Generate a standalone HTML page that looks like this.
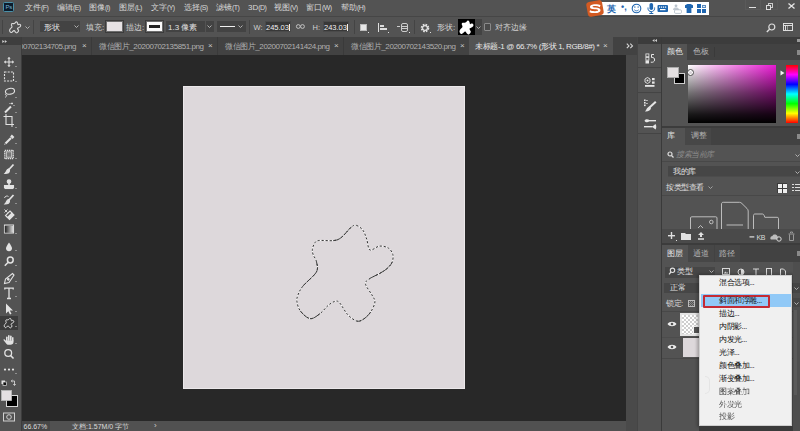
<!DOCTYPE html>
<html><head><meta charset="utf-8">
<style>
*{margin:0;padding:0;box-sizing:border-box}
html,body{width:800px;height:431px;overflow:hidden;background:#535353;font-family:"Liberation Sans",sans-serif;color:#ddd}
.a{position:absolute}
.t{position:absolute;white-space:nowrap;font-size:8px;line-height:10px}
.k{font-size:7px;letter-spacing:-0.6px}
#menubar{left:0;top:0;width:800px;height:16px;background:#535353}
#opts{left:0;top:16px;width:800px;height:21px;background:#535353;border-top:1px solid #464646}
#tools{left:0;top:37px;width:21px;height:394px;background:#535353}
#toolhdr{left:0;top:37px;width:21px;height:7.5px;background:#3e3e3e}
#tabbar{left:21px;top:37px;width:617px;height:18px;background:#424242}
#canvas{left:22px;top:55px;width:604px;height:366px;background:#282828}
#status{left:22px;top:421px;width:605px;height:10px;background:#424242}
#doc{left:183px;top:86px;width:282px;height:303px;background:#ddd8db}
#gapcol{left:626px;top:55px;width:11px;height:376px;background:#4a4a4a}
#iconcol{left:637px;top:37px;width:25px;height:394px;background:#3c3c3c}
#panels{left:662px;top:37px;width:138px;height:394px;background:#3c3c3c}
.mi{color:#d8d8d8;top:3px}
.sep{position:absolute;width:1px;background:#444}
.fld{position:absolute;background:#454545}
.ol{color:#d0d0d0;top:22px}
svg{position:absolute;overflow:visible}
</style></head><body>
<div id="menubar" class="a"></div>
<div id="opts" class="a"></div>
<div id="tools" class="a"></div>
<div id="toolhdr" class="a"></div>
<div id="tabbar" class="a"></div>
<div id="canvas" class="a"></div>
<div id="status" class="a"></div>
<div id="doc" class="a"></div>
<div id="gapcol" class="a"></div>
<div id="iconcol" class="a"></div>
<div id="panels" class="a"></div>

<!-- menubar -->
<div class="a" style="left:3px;top:2px;width:10.5px;height:10.2px;background:#0c1c2c;border:1.5px solid #4a90a8;border-radius:1.5px"></div>
<div class="t" style="left:5.5px;top:3.5px;font-size:6px;line-height:7px;color:#7ab6d6;letter-spacing:-0.3px">Ps</div>
<div class="t mi" style="left:25px">文件<span class="k">(F)</span></div>
<div class="t mi" style="left:57px">编辑<span class="k">(E)</span></div>
<div class="t mi" style="left:89px">图像<span class="k">(I)</span></div>
<div class="t mi" style="left:119px">图层<span class="k">(L)</span></div>
<div class="t mi" style="left:151px">文字<span class="k">(Y)</span></div>
<div class="t mi" style="left:184px">选择<span class="k">(S)</span></div>
<div class="t mi" style="left:216px">滤镜<span class="k">(T)</span></div>
<div class="t mi" style="left:248px"><span class="k" style="font-size:8px;letter-spacing:0">3D</span><span class="k">(D)</span></div>
<div class="t mi" style="left:274px">视图<span class="k">(V)</span></div>
<div class="t mi" style="left:306px">窗口<span class="k">(W)</span></div>
<div class="t mi" style="left:341px">帮助<span class="k">(H)</span></div>

<!-- sogou ime bar -->
<div class="a" style="left:599px;top:2px;width:110px;height:13px;background:#fff"></div>
<div class="a" style="left:587px;top:1px;width:15.5px;height:15px;background:#d35a22;border-radius:3px;transform:rotate(-10deg)"></div>
<svg style="left:0;top:0" width="610" height="20"><path d="M600.5 5.2C599 4.3 596.5 4 594 4.2C591 4.5 589.8 5.7 590 7.3C590.2 8.8 592 9.2 594.5 9.3C597 9.4 598 9.6 598 10.3C598 11 596.5 11.3 594.5 11.2C592.5 11.1 591 10.7 590 10.2L589.5 12.2C591 12.9 593 13.2 595 13.1C598.5 13 600.5 12 600.5 10.2C600.5 8.4 598.5 7.7 595.5 7.6C593.3 7.5 592.5 7.3 592.5 6.8C592.5 6.2 593.8 6 595.5 6.1C597.2 6.2 598.5 6.5 599.8 7.2Z" fill="#fff"/></svg>
<div class="t" style="left:607px;top:3.5px;font-size:9px;color:#1f66b0;font-weight:bold">英</div>
<div class="t" style="left:621px;top:2px;font-size:9px;color:#1f66b0;font-weight:bold">•,</div>
<svg style="left:0;top:0" width="720" height="20"><g fill="none" stroke="#1f66b0">
<circle cx="636.5" cy="8.5" r="4.3" stroke-width="1.1"/>
<path d="M634.3 9.8C635.5 11.2 637.5 11.2 638.7 9.8" stroke-width="0.9"/>
</g><g fill="#1f66b0"><rect x="634.3" y="6.4" width="1.1" height="1.3"/><rect x="637.6" y="6.4" width="1.1" height="1.3"/>
<rect x="649.5" y="3" width="3.6" height="7" rx="1.8"/>
<path d="M648 7.5V8.5C648 10.5 649.5 11.6 651.3 11.6C653.1 11.6 654.6 10.5 654.6 8.5V7.5" fill="none" stroke="#1f66b0" stroke-width="1"/>
<rect x="650.8" y="11.5" width="1" height="2"/><rect x="649.3" y="13" width="4" height="1"/>
<rect x="657.5" y="5" width="10.5" height="7" rx="1"/>
</g><g fill="#fff"><rect x="659" y="6.5" width="1.2" height="1.2"/><rect x="661" y="6.5" width="1.2" height="1.2"/><rect x="663" y="6.5" width="1.2" height="1.2"/><rect x="665" y="6.5" width="1.2" height="1.2"/><rect x="660" y="9" width="5.5" height="1.2"/></g></svg>
<svg style="left:0;top:0" width="712" height="18"><circle cx="676" cy="5.8" r="1.4" fill="#b8c2cc"/><path d="M673 10C673 8 674.5 7.6 676 7.6C677.5 7.6 679 8 679 10Z" fill="#c2cad2"/><rect x="674.5" y="9.8" width="7" height="3.6" rx="1.2" fill="none" stroke="#b8c2cc" stroke-width="0.9"/></svg>

<div class="a" style="left:685px;top:4px;width:8px;height:9px;background:#1f66b0;clip-path:polygon(0 15%,30% 0,70% 0,100% 15%,100% 45%,80% 45%,80% 100%,20% 100%,20% 45%,0 45%)"></div>
<div class="a" style="left:697px;top:4px;width:4px;height:4px;background:#1f66b0"></div>
<div class="a" style="left:702px;top:4.5px;width:3.5px;height:3.5px;background:#dfe8f2;border:1px solid #5b8cc0"></div>
<div class="a" style="left:697px;top:9px;width:4px;height:4px;background:#1f66b0"></div>
<div class="a" style="left:702px;top:9px;width:4px;height:4px;background:#1f66b0"></div>

<!-- window controls -->
<div class="a" style="left:744.5px;top:-1px;width:16px;height:11px;border:1px solid #5a5a5a"></div><div class="a" style="left:760.5px;top:-1px;width:17px;height:11px;border:1px solid #585858;border-left:none"></div><div class="a" style="left:749px;top:6.5px;width:7px;height:1.6px;background:#e0e0e0"></div>
<div class="a" style="left:768px;top:3px;width:5px;height:5px;border:1px solid #ccc"></div>
<div class="a" style="left:766px;top:5px;width:5px;height:5px;border:1px solid #ddd;background:#535353"></div>
<svg style="left:788px;top:3px" width="7" height="6"><path d="M0.5 0.5L6.5 5.5M6.5 0.5L0.5 5.5" stroke="#e6e6e6" stroke-width="1.3"/></svg>


<!-- options bar -->
<div class="a" style="left:2px;top:20px;width:1px;height:14px;background:#444"></div>
<svg style="left:0;top:0" width="30" height="40"><path transform="translate(9.6,21.8) scale(0.115) translate(-297,-225)" d="M356.5 225.4C358.4 225.9 361.2 227.9 362.9 230.2C364.6 232.5 365.5 235.8 366.7 239.1C367.9 242.4 367.8 248.8 369.9 250C372 251.2 376.3 246.4 379.4 246.1C382.5 245.8 386.2 246.7 388.4 248.1C390.6 249.5 392.2 252.1 392.8 254.4C393.4 256.7 393.1 259.8 392.2 262.1C391.2 264.5 389.2 266.6 387.1 268.5C385 270.4 382.4 271.9 379.4 273.6C376.4 275.3 371.6 277.2 369.3 278.9C367 280.6 365.1 281.3 365.5 284C365.9 286.7 370.3 291.9 371.9 294.9C373.5 297.9 375.1 299.1 374.9 302C374.7 304.9 372.5 309.2 370.6 312.1C368.7 315 365.9 317.6 363.6 319.1C361.3 320.6 359.2 321.8 356.6 321C354 320.2 350.6 317.7 347.7 314.6C344.8 311.5 341.6 304.8 339.4 302.6C337.2 300.4 336.4 301 334.5 301.5C332.6 302 330.6 303.4 328.2 305.4C325.8 307.4 322.9 311.5 319.9 313.7C316.9 315.9 313.4 319.1 310.1 318.6C306.9 318.2 302.6 313.9 300.4 311C298.2 308.1 297.2 304 296.9 301.2C296.5 298.4 297.3 296.8 298.3 294.2C299.3 291.6 300.1 289.6 303.1 285.9C306.1 282.2 314.2 276 316.4 272C318.6 268 317 264.7 316.5 261.8C316 258.9 313.9 256.8 313.2 254.8C312.5 252.8 312.2 251.3 312.4 249.6C312.5 247.9 313.1 245.9 314.1 244.4C315.1 242.9 315 241.2 318.2 240.6C321.4 240 329.4 241.1 333.3 240.6C337.2 240.1 338.4 239.7 341.4 237.4C344.4 235.1 348.9 229 351.4 227C353.9 225 354.6 224.9 356.5 225.4Z" fill="none" stroke="#d8d8d8" stroke-width="1.1" vector-effect="non-scaling-stroke"/></svg>
<svg style="left:25px;top:26px" width="5" height="3"><path d="M0.5 0.5L2.5 2.5L4.5 0.5" fill="none" stroke="#bbb" stroke-width="0.9"/></svg>
<div class="a" style="left:33px;top:20px;width:1px;height:14px;background:#444"></div>
<div class="fld" style="left:40px;top:21px;width:40px;height:11px;background:#434343"></div>
<div class="t ol" style="left:44px;top:22.5px;color:#e0e0e0">形状</div>
<svg style="left:74px;top:25px" width="5" height="3"><path d="M0.5 0.5L2.5 2.5L4.5 0.5" fill="none" stroke="#bbb" stroke-width="0.9"/></svg>
<div class="t ol" style="left:86px;top:22.5px">填充:</div>
<div class="a" style="left:105px;top:20px;width:19px;height:13px;border:1px solid #3c3c3c;background:#6e6e6e"></div><div class="a" style="left:107px;top:22px;width:15px;height:9px;background:#e6e2e4"></div>
<div class="t ol" style="left:126px;top:22.5px">描边:</div>
<div class="a" style="left:145px;top:20px;width:19px;height:13px;border:1px solid #3c3c3c;background:#6e6e6e"></div><div class="a" style="left:147px;top:22px;width:15px;height:9px;background:#fafafa"></div>
<div class="a" style="left:149px;top:25px;width:11px;height:3px;background:#222"></div>
<div class="fld" style="left:166px;top:21px;width:39px;height:11px;background:#434343"></div>
<div class="t ol" style="left:168px;top:22.5px;color:#e0e0e0"><span class="k" style="font-size:8px;letter-spacing:0">1.3</span> 像素</div>
<div class="fld" style="left:205px;top:21px;width:9px;height:11px;background:#434343;border-left:1px solid #535353"></div>
<svg style="left:207px;top:25px" width="5" height="3"><path d="M0.5 0.5L2.5 2.5L4.5 0.5" fill="none" stroke="#bbb" stroke-width="0.9"/></svg>
<div class="fld" style="left:217px;top:21px;width:29px;height:11px;background:#434343"></div>
<div class="a" style="left:220px;top:26px;width:15px;height:1px;background:#f0f0f0"></div>
<svg style="left:238px;top:25px" width="5" height="3"><path d="M0.5 0.5L2.5 2.5L4.5 0.5" fill="none" stroke="#bbb" stroke-width="0.9"/></svg>
<div class="a" style="left:249px;top:20px;width:1px;height:14px;background:#444"></div>
<div class="t ol" style="left:253.5px;top:22.5px;font-size:7.5px">W:</div>
<div class="fld" style="left:265px;top:21px;width:26px;height:11px;background:#383838;border:1px solid #4a4a4a"></div>
<div class="t ol" style="left:266px;top:22.5px;font-size:7.5px;color:#f0f0f0;letter-spacing:0px">245.03</div>
<div class="a" style="left:289px;top:24px;width:1px;height:7px;background:#eee"></div>
<svg style="left:296px;top:24px" width="9" height="5"><circle cx="2.3" cy="2.5" r="1.9" fill="none" stroke="#ccc" stroke-width="0.9"/><circle cx="6.5" cy="2.5" r="1.9" fill="none" stroke="#ccc" stroke-width="0.9"/></svg>
<div class="t ol" style="left:312.5px;top:22.5px;font-size:7.5px">H:</div>
<div class="fld" style="left:323px;top:21px;width:26px;height:11px;background:#383838;border:1px solid #4a4a4a"></div>
<div class="t ol" style="left:324px;top:22.5px;font-size:7.5px;color:#f0f0f0;letter-spacing:0px">243.03</div>
<div class="a" style="left:347px;top:24px;width:1px;height:7px;background:#eee"></div>
<div class="a" style="left:354px;top:20px;width:1px;height:14px;background:#444"></div>
<div class="a" style="left:360px;top:24px;width:7px;height:7px;background:#e8e8e8;border:1px solid #bbb"></div>
<div class="a" style="left:368px;top:32px;width:1px;height:1px;background:#ddd"></div>
<div class="a" style="left:378px;top:23px;width:1px;height:9px;background:#ddd"></div>
<div class="a" style="left:380px;top:25px;width:4px;height:2px;background:#ddd"></div>
<div class="a" style="left:380px;top:28px;width:7px;height:2px;background:#ddd"></div>
<div class="a" style="left:388px;top:32px;width:1px;height:1px;background:#ddd"></div>
<div class="a" style="left:397px;top:26px;width:3px;height:1px;background:#ccc"></div>
<div class="a" style="left:401px;top:23px;width:7px;height:9px;border:1px solid #ccc;border-radius:2px"></div>
<div class="a" style="left:402px;top:26px;width:5px;height:1px;background:#ccc"></div>
<div class="a" style="left:402px;top:28px;width:5px;height:1px;background:#ccc"></div>
<div class="a" style="left:409px;top:32px;width:1px;height:1px;background:#ddd"></div>
<div class="a" style="left:414px;top:20px;width:1px;height:14px;background:#444"></div>
<svg style="left:420px;top:23px" width="10" height="10" viewBox="0 0 10 10"><circle cx="5" cy="5" r="3.3" fill="none" stroke="#e0e0e0" stroke-width="2" stroke-dasharray="1.6 1"/><circle cx="5" cy="5" r="2.4" fill="none" stroke="#e0e0e0" stroke-width="1.2"/></svg>
<div class="a" style="left:430px;top:32px;width:1px;height:1px;background:#ddd"></div>
<div class="t ol" style="left:437px;top:22.5px">形状:</div>
<div class="a" style="left:458px;top:19px;width:17px;height:16px;background:#000"></div>
<svg style="left:0;top:0" width="480" height="40"><path transform="translate(459.5,20.5) scale(0.145) translate(-297,-225)" d="M356.5 225.4C358.4 225.9 361.2 227.9 362.9 230.2C364.6 232.5 365.5 235.8 366.7 239.1C367.9 242.4 367.8 248.8 369.9 250C372 251.2 376.3 246.4 379.4 246.1C382.5 245.8 386.2 246.7 388.4 248.1C390.6 249.5 392.2 252.1 392.8 254.4C393.4 256.7 393.1 259.8 392.2 262.1C391.2 264.5 389.2 266.6 387.1 268.5C385 270.4 382.4 271.9 379.4 273.6C376.4 275.3 371.6 277.2 369.3 278.9C367 280.6 365.1 281.3 365.5 284C365.9 286.7 370.3 291.9 371.9 294.9C373.5 297.9 375.1 299.1 374.9 302C374.7 304.9 372.5 309.2 370.6 312.1C368.7 315 365.9 317.6 363.6 319.1C361.3 320.6 359.2 321.8 356.6 321C354 320.2 350.6 317.7 347.7 314.6C344.8 311.5 341.6 304.8 339.4 302.6C337.2 300.4 336.4 301 334.5 301.5C332.6 302 330.6 303.4 328.2 305.4C325.8 307.4 322.9 311.5 319.9 313.7C316.9 315.9 313.4 319.1 310.1 318.6C306.9 318.2 302.6 313.9 300.4 311C298.2 308.1 297.2 304 296.9 301.2C296.5 298.4 297.3 296.8 298.3 294.2C299.3 291.6 300.1 289.6 303.1 285.9C306.1 282.2 314.2 276 316.4 272C318.6 268 317 264.7 316.5 261.8C316 258.9 313.9 256.8 313.2 254.8C312.5 252.8 312.2 251.3 312.4 249.6C312.5 247.9 313.1 245.9 314.1 244.4C315.1 242.9 315 241.2 318.2 240.6C321.4 240 329.4 241.1 333.3 240.6C337.2 240.1 338.4 239.7 341.4 237.4C344.4 235.1 348.9 229 351.4 227C353.9 225 354.6 224.9 356.5 225.4Z" fill="#fff"/></svg>
<div class="fld" style="left:475px;top:19px;width:7px;height:16px;background:#434343"></div>
<svg style="left:476px;top:26px" width="5" height="3"><path d="M0.5 0.5L2.5 2.5L4.5 0.5" fill="none" stroke="#bbb" stroke-width="0.9"/></svg>
<div class="a" style="left:484px;top:23px;width:7px;height:8px;border:1px solid #8a8a8a;border-radius:1px;background:#4a4a4a"></div>
<div class="t ol" style="left:495px;top:22.5px">对齐边缘</div>
<svg style="left:766px;top:23px" width="10" height="10" viewBox="0 0 10 10"><circle cx="5.8" cy="4" r="3" fill="none" stroke="#ddd" stroke-width="1.2"/><path d="M3.6 6.2L0.8 9" stroke="#ddd" stroke-width="1.4"/></svg>
<div class="a" style="left:783px;top:23px;width:10px;height:8px;border:1px solid #ddd"></div>
<div class="a" style="left:784px;top:25px;width:8px;height:1px;background:#ddd"></div>
<div class="a" style="left:784.5px;top:26px;width:1.5px;height:4px;background:#ddd"></div>
<div class="a" style="left:787px;top:26px;width:1px;height:4px;background:#999"></div>

<!-- tabs -->
<div class="a" style="left:22px;top:37px;width:60px;height:18px;overflow:hidden"><div class="t" style="left:-3px;top:4.5px;color:#b0b0b0;font-size:8px;letter-spacing:-0.5px">00702134705.png</div></div>
<div class="t" style="left:82px;top:41px;color:#c8c8c8;font-size:8px">×</div>
<div class="a" style="left:91px;top:37px;width:1px;height:18px;background:#3a3a3a"></div>
<div class="t" style="left:99px;top:41.5px;color:#b0b0b0;font-size:8px;letter-spacing:-0.42px">微信图片_20200702135851.png</div>
<div class="t" style="left:208px;top:41px;color:#c8c8c8;font-size:8px">×</div>
<div class="a" style="left:217px;top:37px;width:1px;height:18px;background:#3a3a3a"></div>
<div class="t" style="left:225px;top:41.5px;color:#b0b0b0;font-size:8px;letter-spacing:-0.42px">微信图片_20200702141424.png</div>
<div class="t" style="left:334px;top:41px;color:#c8c8c8;font-size:8px">×</div>
<div class="a" style="left:343px;top:37px;width:1px;height:18px;background:#3a3a3a"></div>
<div class="t" style="left:351px;top:41.5px;color:#b0b0b0;font-size:8px;letter-spacing:-0.42px">微信图片_20200702143520.png</div>
<div class="t" style="left:460px;top:41px;color:#c8c8c8;font-size:8px">×</div>
<div class="a" style="left:469px;top:37px;width:144px;height:18px;background:#535353"></div>
<div class="t" style="left:475px;top:41.5px;color:#e8e8e8;font-size:8px;letter-spacing:-0.35px">未标题-1 @ 66.7% (形状 1, RGB/8#) *</div>
<div class="t" style="left:603px;top:41px;color:#d0d0d0;font-size:8px">×</div>

<!-- canvas shape -->
<svg style="left:0;top:0" width="800" height="431"><path d="M356.5 225.4C358.4 225.9 361.2 227.9 362.9 230.2C364.6 232.5 365.5 235.8 366.7 239.1C367.9 242.4 367.8 248.8 369.9 250C372 251.2 376.3 246.4 379.4 246.1C382.5 245.8 386.2 246.7 388.4 248.1C390.6 249.5 392.2 252.1 392.8 254.4C393.4 256.7 393.1 259.8 392.2 262.1C391.2 264.5 389.2 266.6 387.1 268.5C385 270.4 382.4 271.9 379.4 273.6C376.4 275.3 371.6 277.2 369.3 278.9C367 280.6 365.1 281.3 365.5 284C365.9 286.7 370.3 291.9 371.9 294.9C373.5 297.9 375.1 299.1 374.9 302C374.7 304.9 372.5 309.2 370.6 312.1C368.7 315 365.9 317.6 363.6 319.1C361.3 320.6 359.2 321.8 356.6 321C354 320.2 350.6 317.7 347.7 314.6C344.8 311.5 341.6 304.8 339.4 302.6C337.2 300.4 336.4 301 334.5 301.5C332.6 302 330.6 303.4 328.2 305.4C325.8 307.4 322.9 311.5 319.9 313.7C316.9 315.9 313.4 319.1 310.1 318.6C306.9 318.2 302.6 313.9 300.4 311C298.2 308.1 297.2 304 296.9 301.2C296.5 298.4 297.3 296.8 298.3 294.2C299.3 291.6 300.1 289.6 303.1 285.9C306.1 282.2 314.2 276 316.4 272C318.6 268 317 264.7 316.5 261.8C316 258.9 313.9 256.8 313.2 254.8C312.5 252.8 312.2 251.3 312.4 249.6C312.5 247.9 313.1 245.9 314.1 244.4C315.1 242.9 315 241.2 318.2 240.6C321.4 240 329.4 241.1 333.3 240.6C337.2 240.1 338.4 239.7 341.4 237.4C344.4 235.1 348.9 229 351.4 227C353.9 225 354.6 224.9 356.5 225.4Z" fill="none" stroke="#ffffff" stroke-width="1"/><path d="M356.5 225.4C358.4 225.9 361.2 227.9 362.9 230.2C364.6 232.5 365.5 235.8 366.7 239.1C367.9 242.4 367.8 248.8 369.9 250C372 251.2 376.3 246.4 379.4 246.1C382.5 245.8 386.2 246.7 388.4 248.1C390.6 249.5 392.2 252.1 392.8 254.4C393.4 256.7 393.1 259.8 392.2 262.1C391.2 264.5 389.2 266.6 387.1 268.5C385 270.4 382.4 271.9 379.4 273.6C376.4 275.3 371.6 277.2 369.3 278.9C367 280.6 365.1 281.3 365.5 284C365.9 286.7 370.3 291.9 371.9 294.9C373.5 297.9 375.1 299.1 374.9 302C374.7 304.9 372.5 309.2 370.6 312.1C368.7 315 365.9 317.6 363.6 319.1C361.3 320.6 359.2 321.8 356.6 321C354 320.2 350.6 317.7 347.7 314.6C344.8 311.5 341.6 304.8 339.4 302.6C337.2 300.4 336.4 301 334.5 301.5C332.6 302 330.6 303.4 328.2 305.4C325.8 307.4 322.9 311.5 319.9 313.7C316.9 315.9 313.4 319.1 310.1 318.6C306.9 318.2 302.6 313.9 300.4 311C298.2 308.1 297.2 304 296.9 301.2C296.5 298.4 297.3 296.8 298.3 294.2C299.3 291.6 300.1 289.6 303.1 285.9C306.1 282.2 314.2 276 316.4 272C318.6 268 317 264.7 316.5 261.8C316 258.9 313.9 256.8 313.2 254.8C312.5 252.8 312.2 251.3 312.4 249.6C312.5 247.9 313.1 245.9 314.1 244.4C315.1 242.9 315 241.2 318.2 240.6C321.4 240 329.4 241.1 333.3 240.6C337.2 240.1 338.4 239.7 341.4 237.4C344.4 235.1 348.9 229 351.4 227C353.9 225 354.6 224.9 356.5 225.4Z" fill="none" stroke="#333" stroke-width="1" stroke-dasharray="2.2 1.8"/><path d="M333.3 240.6C337.2 240.1 338.4 239.7 341.4 237.4C344.4 235.1 348.9 229 351.4 227 M303.1 285.9C306.1 282.2 314.2 276 316.4 272C318.6 268 317 264.7 316.5 261.8 M392.2 262.1C391.2 264.5 389.2 266.6 387.1 268.5C385 270.4 382.4 271.9 379.4 273.6C376.4 275.3 371.6 277.2 369.3 278.9 M370.6 312.1C368.7 315 365.9 317.6 363.6 319.1C361.3 320.6 359.2 321.8 356.6 321 M319.9 313.7C316.9 315.9 313.4 319.1 310.1 318.6C306.9 318.2 302.6 313.9 300.4 311" fill="none" stroke="#3c3c3c" stroke-width="1" stroke-dasharray="5 1.4"/></svg>
<div class="a" style="left:183px;top:86px;width:282px;height:303px;border:1px solid #ebe8ea"></div>

<!-- status -->
<div class="a" style="left:22px;top:421px;width:604px;height:10px;background:#515151"></div>
<div class="a" style="left:22px;top:421px;width:28px;height:10px;background:#474747"></div>
<div class="t" style="left:23.5px;top:421.5px;font-size:7px;line-height:9px;color:#dcdcdc">66.67%</div>
<div class="t" style="left:72px;top:421.5px;font-size:7px;line-height:9px;color:#dcdcdc">文档:1.57M/0 字节</div>
<div class="t" style="left:154px;top:421px;font-size:8px;line-height:9px;color:#ccc">›</div>
<!-- toolbar -->
<svg style="left:2px;top:39.5px" width="6" height="4"><path d="M0.3 0V3L2.5 1.5ZM2.8 0V3L5 1.5Z" fill="#cfcfcf"/></svg>
<div class="a" style="left:21px;top:37px;width:1px;height:394px;background:#3c3c3c"></div>
<div class="a" style="left:0;top:316px;width:18px;height:14px;background:#3b3b3b"></div>
<svg style="left:0;top:0" width="22" height="431" viewBox="0 0 22 431">
<g fill="none" stroke="#e2e2e2" stroke-width="1.1">
<!-- move -->
<path d="M9 57.5V66.5M4.5 62H13.5"/>
<path d="M9 57L7.3 58.8H10.7ZM9 67L7.3 65.2H10.7ZM4 62L5.8 60.3V63.7ZM14 62L12.2 60.3V63.7Z" fill="#e2e2e2" stroke="none"/>
<!-- marquee -->
<rect x="4.5" y="72" width="9" height="9" stroke-dasharray="2 1.2"/>
<!-- lasso -->
<ellipse cx="10" cy="91.3" rx="4.6" ry="2.9" transform="rotate(-12 10 91.3)"/>
<path d="M6.3 93.3C5 94 5.5 95.5 6.5 95.3C7 95 6.5 96.5 5.2 97.5" stroke-width="0.9"/>
<!-- wand -->
<path d="M5 112.5L11 106.5" stroke-width="2"/>
<path d="M12 102.5V104.5M11 103.5H13M14 105V106M10 103V104" stroke-width="0.9"/>
<!-- crop -->
<path d="M6 114V124.5H14M3.5 116.5H12V127"/>
<!-- eyedropper -->
<path d="M5.5 143.5L11 138" stroke-width="2.2"/>
<path d="M11 135.5L13.5 138" stroke-width="2.5"/>
<path d="M5 144L4.5 144.5" stroke-width="1.2"/>
<!-- frame/healing -->
<rect x="4.8" y="150.3" width="8.4" height="8.4" fill="none" stroke="#e2e2e2" stroke-width="1.3" stroke-dasharray="1.4 0.7"/><rect x="6.3" y="151.8" width="5.4" height="5.4" fill="#777" stroke="#ddd" stroke-width="0.8"/>
<!-- brush -->
<path d="M13.5 164.5L8.5 170" stroke-width="1.8"/>
<path d="M8.5 169C6.5 169.5 6.5 172 5 173.5C7.5 173.5 9.5 172.5 9.5 170.5Z" fill="#e2e2e2"/>
<!-- stamp -->
<circle cx="9" cy="181.5" r="1.8" fill="#e2e2e2"/>
<path d="M9 183V185" stroke-width="1.6"/>
<path d="M4.5 185.5H13.5V187.5H4.5Z" fill="#e2e2e2"/>
<path d="M4.5 188.5H13.5" />
<!-- history brush -->
<path d="M13.5 195L8.5 200.5" stroke-width="1.8"/>
<path d="M8.5 199.5C6.5 200 6.5 202.5 5 204C7.5 204 9.5 203 9.5 201Z" fill="#e2e2e2"/>
<path d="M4.5 198C5 196 7 195.5 8.5 196.5" stroke-width="0.9"/>
<!-- eraser -->
<path d="M7.5 217.5L12 213L14 215L9.5 219.5Z" fill="#e2e2e2"/>
<path d="M7.5 217.5L5.5 215.5L10 211L12 213" />
<path d="M4.5 209.5L7.5 212.5M7.5 209.5L4.5 212.5" stroke-width="0.9"/>
<!-- gradient -->
<rect x="4.5" y="225" width="9" height="8" stroke="#d8d8d8"/>
<g transform="translate(0,1)">
<!-- blur drop -->
<path d="M9 241.5C9 241.5 6 245.5 6 247.3C6 249 7.3 250.3 9 250.3C10.7 250.3 12 249 12 247.3C12 245.5 9 241.5 9 241.5Z" fill="#e2e2e2" stroke="none"/>
<!-- dodge -->
<circle cx="10.3" cy="259" r="2.9" stroke-width="1.5"/>
<path d="M8.2 261.2L4.8 264.8" stroke-width="1.5"/>
<!-- pen -->
<path d="M12.5 272.5L14 274L9 281.5L4.5 282.5L5.5 278Z" stroke-width="1.1"/>
<circle cx="8.3" cy="278.3" r="0.8" fill="#e2e2e2"/>
<!-- type -->
<path d="M4.8 288.5V287.2H13.2V288.5M9 287.2V297.5M7 297.5H11" stroke-width="1.3"/>
<!-- path select arrow -->
<path d="M6 302.5V312.5L8.3 310.2L10 313.5L11.5 312.8L9.8 309.5H13Z" fill="#e2e2e2" stroke="none"/>
<!-- custom shape -->
<path transform="translate(4.2,317.3) scale(0.1) translate(-297,-225)" d="M356.5 225.4C358.4 225.9 361.2 227.9 362.9 230.2C364.6 232.5 365.5 235.8 366.7 239.1C367.9 242.4 367.8 248.8 369.9 250C372 251.2 376.3 246.4 379.4 246.1C382.5 245.8 386.2 246.7 388.4 248.1C390.6 249.5 392.2 252.1 392.8 254.4C393.4 256.7 393.1 259.8 392.2 262.1C391.2 264.5 389.2 266.6 387.1 268.5C385 270.4 382.4 271.9 379.4 273.6C376.4 275.3 371.6 277.2 369.3 278.9C367 280.6 365.1 281.3 365.5 284C365.9 286.7 370.3 291.9 371.9 294.9C373.5 297.9 375.1 299.1 374.9 302C374.7 304.9 372.5 309.2 370.6 312.1C368.7 315 365.9 317.6 363.6 319.1C361.3 320.6 359.2 321.8 356.6 321C354 320.2 350.6 317.7 347.7 314.6C344.8 311.5 341.6 304.8 339.4 302.6C337.2 300.4 336.4 301 334.5 301.5C332.6 302 330.6 303.4 328.2 305.4C325.8 307.4 322.9 311.5 319.9 313.7C316.9 315.9 313.4 319.1 310.1 318.6C306.9 318.2 302.6 313.9 300.4 311C298.2 308.1 297.2 304 296.9 301.2C296.5 298.4 297.3 296.8 298.3 294.2C299.3 291.6 300.1 289.6 303.1 285.9C306.1 282.2 314.2 276 316.4 272C318.6 268 317 264.7 316.5 261.8C316 258.9 313.9 256.8 313.2 254.8C312.5 252.8 312.2 251.3 312.4 249.6C312.5 247.9 313.1 245.9 314.1 244.4C315.1 242.9 315 241.2 318.2 240.6C321.4 240 329.4 241.1 333.3 240.6C337.2 240.1 338.4 239.7 341.4 237.4C344.4 235.1 348.9 229 351.4 227C353.9 225 354.6 224.9 356.5 225.4Z" stroke-width="1" vector-effect="non-scaling-stroke"/>
<!-- hand -->
<g fill="#e2e2e2" stroke="none">
<rect x="6" y="335.5" width="1.6" height="5" rx="0.8"/>
<rect x="8" y="334" width="1.6" height="6" rx="0.8"/>
<rect x="10" y="334.5" width="1.6" height="5.5" rx="0.8"/>
<rect x="12" y="336" width="1.5" height="4.5" rx="0.75"/>
<path d="M6 339.5H13.5V341C13.5 342.8 12.2 343.8 10.5 343.8H8.5C7.2 343.8 6.5 343 5.8 342L3.6 339.3C3.2 338.7 4 338 4.6 338.5L6 339.8Z"/>
</g>
<!-- zoom -->
<circle cx="8.2" cy="352" r="3.4" stroke-width="1.3"/>
<path d="M10.6 354.5L13.5 357.5" stroke-width="1.6"/>
</g>
<!-- dots -->
<circle cx="5" cy="369.6" r="1.1" fill="#e2e2e2" stroke="none"/><circle cx="9" cy="369.6" r="1.1" fill="#e2e2e2" stroke="none"/><circle cx="13" cy="369.6" r="1.1" fill="#e2e2e2" stroke="none"/>
<!-- default/swap -->
<g transform="translate(0,2)"><rect x="1.5" y="378.5" width="3.5" height="3.5" fill="#e2e2e2" stroke="none"/>
<rect x="3" y="380" width="3.5" height="3.5" fill="#111" stroke="#e2e2e2" stroke-width="0.7"/>
<path d="M11.5 379H14.5V383M13.3 382L14.5 383.5L15.7 382M12.5 378L11.2 379L12.5 380" stroke-width="0.8"/></g>
<!-- quick mask -->
<rect x="3.5" y="413" width="11" height="8" stroke="#d0d0d0" stroke-width="1"/>
<circle cx="9" cy="417" r="2.3" stroke="#d0d0d0" stroke-width="1"/>
</g>
<g fill="#cfcfcf">
<rect x="15.5" y="66" width="1" height="1"/><rect x="15.5" y="81" width="1" height="1"/><rect x="15.5" y="97" width="1" height="1"/><rect x="15.5" y="112" width="1" height="1"/><rect x="15.5" y="127" width="1" height="1"/>
<rect x="15.5" y="143" width="1" height="1"/><rect x="15.5" y="158" width="1" height="1"/><rect x="15.5" y="173" width="1" height="1"/><rect x="15.5" y="188" width="1" height="1"/><rect x="15.5" y="203" width="1" height="1"/><rect x="15.5" y="218" width="1" height="1"/><rect x="15.5" y="233" width="1" height="1"/>
<rect x="15.5" y="250" width="1" height="1"/><rect x="15.5" y="265" width="1" height="1"/><rect x="15.5" y="281" width="1" height="1"/><rect x="15.5" y="296" width="1" height="1"/><rect x="15.5" y="311" width="1" height="1"/><rect x="15.5" y="326" width="1" height="1"/><rect x="15.5" y="343" width="1" height="1"/><rect x="15.5" y="373" width="1" height="1"/>
</g>
<rect x="4.8" y="226" width="8.4" height="6.6" fill="url(#gr)"/>
<defs><linearGradient id="gr" x1="0" y1="0" x2="1" y2="0"><stop offset="0" stop-color="#222"/><stop offset="1" stop-color="#ddd"/></linearGradient></defs>
<rect x="6.5" y="395.5" width="11" height="11" fill="#000" stroke="#d8d8d8" stroke-width="1"/>
<rect x="1.5" y="390.5" width="10" height="10" fill="#e4e0e2" stroke="#bbb" stroke-width="0.8"/>
</svg>

<!-- gap col & icon col -->
<div class="a" style="left:627px;top:37px;width:10px;height:18px;background:#424242"></div>
<div class="a" style="left:637px;top:37px;width:1px;height:394px;background:#454545"></div>
<div class="a" style="left:638px;top:44px;width:23px;height:387px;background:#525252"></div>
<div class="a" style="left:638px;top:44px;width:23px;height:24px;background:#535353;border-bottom:1px solid #444"></div>
<div class="a" style="left:638px;top:69px;width:23px;height:24px;background:#535353;border-bottom:1px solid #444"></div>
<div class="a" style="left:638px;top:94px;width:23px;height:40px;background:#535353;border-bottom:1px solid #444"></div>
<svg style="left:652px;top:39px" width="6" height="4"><path d="M0.3 1.5L2.5 0V3ZM2.8 1.5L5 0V3Z" fill="#cfcfcf"/></svg>
<div class="a" style="left:661px;top:37px;width:1px;height:394px;background:#3a3a3a"></div>
<svg style="left:0;top:0" width="800" height="431">
<g fill="#e6e6e6">
<rect x="645.9" y="53.9" width="3" height="2.8" fill="none" stroke="#e6e6e6" stroke-width="0.8"/><rect x="645.9" y="57.5" width="3" height="2.6" fill="none" stroke="#e6e6e6" stroke-width="0.8"/><rect x="645.5" y="60.5" width="3.5" height="3"/>
<path d="M654 54.5H651.5V57.5C653.5 57.2 654.8 58.3 654.6 60C654.4 61.8 652.8 62.6 650.8 62.2" fill="none" stroke="#e6e6e6" stroke-width="1"/>
<path d="M647.5 77.5L650 79V82L647.5 83.5L645 82V79Z" fill="none" stroke="#e6e6e6" stroke-width="0.9"/>
<circle cx="647.5" cy="80.5" r="1"/>
<rect x="652" y="78" width="2.6" height="2.2"/><rect x="652" y="81.5" width="2.6" height="2.2"/>
<rect x="645" y="85" width="9.5" height="1.8"/>
<path d="M655.8 101.8L649.5 107.5" stroke="#e6e6e6" stroke-width="2"/>
<path d="M649.5 106.5C647.2 106.8 646.8 109.5 645 111.5C648 111.8 650.8 110.5 651 108Z"/>
<rect x="644" y="99.5" width="1.6" height="1.6"/><rect x="644" y="102" width="1.6" height="1.6"/><rect x="644" y="104.5" width="1.6" height="1.6"/><rect x="646.3" y="100" width="1.3" height="1"/><rect x="646.3" y="103" width="1.3" height="1"/>
<path d="M644.5 120.7C645.5 119 647.5 118.8 649 119.8V121.6C647.5 122.6 645.5 122.4 644.5 120.7Z"/><rect x="649" y="120" width="7" height="1.4"/>
<rect x="644" y="126" width="8.5" height="1.4"/><path d="M652 126.7L655.5 124C656.5 125.5 656.5 128 655.5 129.4Z"/>
</g>
</svg>

<svg style="left:626px;top:42.5px" width="8" height="6"><path d="M0.8 0.6L3 2.9L0.8 5.2M4.3 0.6L6.5 2.9L4.3 5.2" fill="none" stroke="#d6d6d6" stroke-width="1.1"/></svg>
<!-- panels top strip -->
<div class="a" style="left:797px;top:39px;width:3px;height:3px;background:#999"></div>

<!-- color panel -->
<div class="a" style="left:662px;top:44px;width:138px;height:16px;background:#424242"></div>
<div class="a" style="left:662px;top:44px;width:25px;height:16px;background:#535353"></div>
<div class="t" style="left:667px;top:47px;color:#e8e8e8;font-size:8px;letter-spacing:-0.5px">颜色</div>
<div class="t" style="left:693px;top:47px;color:#b4b4b4;font-size:8px;letter-spacing:-0.5px">色板</div>
<div class="a" style="left:714px;top:47px;width:1px;height:10px;background:#3a3a3a"></div>
<div class="a" style="left:797px;top:50px;width:3px;height:5px;background:#8a8a8a"></div>
<div class="a" style="left:662px;top:60px;width:138px;height:66px;background:#535353"></div>
<div class="a" style="left:673.5px;top:73px;width:11.5px;height:11px;background:#000;border:1px solid #cfcfcf"></div>
<div class="a" style="left:667px;top:67px;width:12px;height:11px;background:#e4e0e2;border:1px solid #aaa"></div>
<div class="a" style="left:688px;top:65px;width:88px;height:58px;background:linear-gradient(to bottom,rgba(0,0,0,0) 0%,rgba(0,0,0,0.55) 48%,rgba(0,0,0,0.9) 85%,#000 100%),linear-gradient(to right,#fff,#ea1ad4)"></div>
<div class="a" style="left:687px;top:69px;width:7px;height:7px;border:1px solid #555;border-radius:50%;box-shadow:inset 0 0 0 1px #fff"></div>
<svg style="left:780px;top:70px" width="5" height="6"><path d="M0.5 0.5L4.5 3L0.5 5.5Z" fill="#f0f0f0"/></svg>
<div class="a" style="left:785.5px;top:65px;width:12px;height:58px;background:linear-gradient(to bottom,#f00 0%,#f0f 16.7%,#00f 33.3%,#0ff 50%,#0f0 66.7%,#ff0 83.3%,#f00 100%)"></div>
<div class="a" style="left:662px;top:126px;width:138px;height:2px;background:#3c3c3c"></div>

<!-- library panel -->
<div class="a" style="left:662px;top:128px;width:138px;height:17px;background:#424242"></div>
<div class="a" style="left:662px;top:128px;width:23px;height:17px;background:#535353"></div>
<div class="a" style="left:685px;top:128px;width:26px;height:17px;background:#474747"></div>
<div class="t" style="left:667px;top:131px;color:#e8e8e8;font-size:8px;letter-spacing:-0.5px">库</div>
<div class="t" style="left:691px;top:131px;color:#b4b4b4;font-size:8px;letter-spacing:-0.5px">调整</div>
<div class="a" style="left:797px;top:134px;width:3px;height:5px;background:#8a8a8a"></div>
<div class="a" style="left:662px;top:145px;width:138px;height:84px;background:#535353"></div>
<svg style="left:667px;top:151px" width="7" height="7"><circle cx="3" cy="3" r="2" fill="none" stroke="#ddd" stroke-width="1.2"/><path d="M4.5 4.5L6.5 6.5" stroke="#ddd" stroke-width="1.3"/></svg>
<div class="t" style="left:676px;top:150px;color:#8c8c8c;font-size:8px;letter-spacing:-0.5px;font-style:italic">搜索当前库</div>
<svg style="left:795px;top:154px" width="5" height="3"><path d="M0.5 0.5L2.5 2.5L4.5 0.5" fill="none" stroke="#bbb" stroke-width="0.9"/></svg>
<div class="a" style="left:662px;top:161px;width:138px;height:1px;background:#484848"></div>
<div class="a" style="left:668px;top:166px;width:132px;height:11px;background:#464646;border-bottom:1px solid #4c4c4c"></div>
<div class="t" style="left:673px;top:167px;color:#e0e0e0;font-size:8px;letter-spacing:-0.5px">我的库</div>
<svg style="left:795px;top:171px" width="5" height="3"><path d="M0.5 0.5L2.5 2.5L4.5 0.5" fill="none" stroke="#bbb" stroke-width="0.9"/></svg>
<div class="t" style="left:666px;top:182.5px;color:#e0e0e0;font-size:8px;letter-spacing:-0.5px">按类型查看</div>
<svg style="left:708px;top:186px" width="5" height="3"><path d="M0.5 0.5L2.5 2.5L4.5 0.5" fill="none" stroke="#aaa" stroke-width="0.9"/></svg>
<div class="a" style="left:777px;top:183px;width:10px;height:10px;background:#3a3a3a"></div>
<div class="a" style="left:778px;top:184px;width:4px;height:4px;background:#eee"></div><div class="a" style="left:783px;top:184px;width:4px;height:4px;background:#eee"></div>
<div class="a" style="left:778px;top:189px;width:4px;height:4px;background:#eee"></div><div class="a" style="left:783px;top:189px;width:4px;height:4px;background:#eee"></div>
<div class="a" style="left:792px;top:184px;width:2px;height:1px;background:#ddd"></div><div class="a" style="left:795px;top:184px;width:5px;height:1px;background:#ddd"></div>
<div class="a" style="left:792px;top:187px;width:2px;height:1px;background:#ddd"></div><div class="a" style="left:795px;top:187px;width:5px;height:1px;background:#ddd"></div>
<div class="a" style="left:792px;top:190px;width:2px;height:1px;background:#ddd"></div><div class="a" style="left:795px;top:190px;width:5px;height:1px;background:#ddd"></div>
<div class="a" style="left:662px;top:195px;width:138px;height:1px;background:#484848"></div>
<svg style="left:0;top:0" width="800" height="431"><g fill="none" stroke="#c8c8c8" stroke-width="0.9">
<path d="M690.5 229V218C690.5 217.3 691 216.8 691.7 216.8H715.8C716.5 216.8 717 217.3 717 218V229"/>
<circle cx="711.3" cy="222" r="1.8"/>
<path d="M698 228L700.5 225.5L703 228"/>
<path d="M721.5 229V204C721.5 203 722.2 202.3 723.2 202.3H739.5C740.5 202.3 741.3 202.8 742 203.6L747 208.5C747.7 209.3 748.2 210 748.2 211V229"/>
<path d="M726.5 225H743"/>
<path d="M753.5 229V215.5C753.5 214.6 754 214 755 214H762.5C763.3 214 764 214.5 764.8 217.3H777.2C778 217.3 778.5 217.8 778.5 218.6V229"/>
</g></svg>
<div class="a" style="left:662px;top:229px;width:138px;height:14px;background:#4a4a4a"></div>
<svg style="left:0;top:0" width="800" height="431"><g fill="#e0e0e0">
<rect x="668" y="235" width="7" height="1.4"/><rect x="670.8" y="232" width="1.4" height="7"/><rect x="676" y="240" width="1" height="1"/>
<path d="M681 233H685L686 234H691V240H681Z"/>
<path d="M701 232L698 235H700V237H702V235H704Z"/><rect x="698" y="238" width="6" height="2" fill="#bbb"/>
<rect x="749.5" y="236.3" width="4.8" height="1.2"/>
</g>
<text x="756.5" y="239.5" font-size="7" fill="#d8d8d8" font-family="Liberation Sans" letter-spacing="-0.3">KB</text>
<path d="M771 239.5C770 239.5 770 236 772.5 236C773 234 777 234 777.5 236.5C779 236.5 780 238 779 239.5Z" fill="#bdbdbd"/>
<circle cx="779" cy="239" r="2.2" fill="#4a4a4a" stroke="#d8d8d8" stroke-width="1"/>
<path d="M788.5 234H794.5M789.5 234.5V240.5H793.5V234.5M790.5 233V232H792.5V233" fill="none" stroke="#9a9a9a" stroke-width="1"/>
</svg>
<div class="a" style="left:662px;top:243px;width:138px;height:2px;background:#3c3c3c"></div>

<!-- layers panel -->
<div class="a" style="left:662px;top:245px;width:138px;height:17px;background:#424242"></div>
<div class="a" style="left:662px;top:245px;width:26px;height:17px;background:#535353"></div>
<div class="a" style="left:688px;top:245px;width:26px;height:17px;background:#474747"></div>
<div class="a" style="left:714px;top:245px;width:26px;height:17px;background:#474747;border-left:1px solid #424242"></div>
<div class="t" style="left:667px;top:248.5px;color:#e8e8e8;font-size:8px;letter-spacing:-0.5px">图层</div>
<div class="t" style="left:693px;top:248.5px;color:#b4b4b4;font-size:8px;letter-spacing:-0.5px">通道</div>
<div class="t" style="left:719px;top:248.5px;color:#b4b4b4;font-size:8px;letter-spacing:-0.5px">路径</div>
<div class="a" style="left:797px;top:251px;width:3px;height:5px;background:#8a8a8a"></div>
<div class="a" style="left:662px;top:262px;width:138px;height:169px;background:#535353"></div>
<div class="a" style="left:665px;top:266.5px;width:50px;height:11px;background:#464646"></div>
<svg style="left:668px;top:267px" width="8" height="8"><circle cx="4.5" cy="3.3" r="2.2" fill="none" stroke="#e0e0e0" stroke-width="1.1"/><path d="M3 5L1 7.3" stroke="#e0e0e0" stroke-width="1.2"/></svg>
<div class="t" style="left:677px;top:266.5px;color:#e0e0e0;font-size:8px;letter-spacing:-0.5px">类型</div>
<svg style="left:709px;top:270px" width="5" height="3"><path d="M0.5 0.5L2.5 2.5L4.5 0.5" fill="none" stroke="#bbb" stroke-width="0.9"/></svg>
<svg style="left:0;top:1px" width="800" height="431"><g fill="none" stroke="#d8d8d8" stroke-width="1">
<rect x="722.5" y="267.5" width="7" height="6"/>
<circle cx="741" cy="271" r="3"/>
<path d="M753 268H759M756 268V275"/>
<rect x="766.5" y="267.5" width="5" height="7"/>
<path d="M780.5 268V275H785.5V270L783.5 268Z"/>
</g><path d="M724 272L725.5 270.5L727 272L728 271V272.5H724Z" fill="#d8d8d8"/><path d="M741 268A3 3 0 0 1 741 274Z" fill="#d8d8d8"/></svg>
<div class="a" style="left:664px;top:282.5px;width:136px;height:10.5px;background:#464646"></div>
<div class="t" style="left:670px;top:283px;color:#e0e0e0;font-size:8px;letter-spacing:-0.5px">正常</div>
<div class="t" style="left:666px;top:299px;color:#d8d8d8;font-size:8px;letter-spacing:-0.5px">锁定:</div>
<div class="a" style="left:688px;top:300px;width:6.5px;height:6.5px;border:1px solid #bbb;background:repeating-conic-gradient(#888 0 25%,#535353 0 50%) 0 0/2px 2px"></div>
<div class="a" style="left:662px;top:311px;width:138px;height:1px;background:#484848"></div>
<svg style="left:667px;top:321px" width="10" height="6"><path d="M0.5 3C2.5 0 7.5 0 9.5 3C7.5 6 2.5 6 0.5 3Z" fill="#eee"/><circle cx="5" cy="3" r="1.3" fill="#535353"/></svg>
<div class="a" style="left:680px;top:313px;width:20px;height:23px;border:2px solid #e4e4e4;background:repeating-conic-gradient(#cfcfcf 0 25%,#fff 0 50%) 0 0/4px 4px"></div>
<div class="a" style="left:693px;top:326px;width:7px;height:8px;border:1.5px solid #f0f0f0;background:#555"></div>
<div class="a" style="left:662px;top:337px;width:138px;height:1px;background:#4c4c4c"></div>
<svg style="left:667px;top:344px" width="10" height="6"><path d="M0.5 3C2.5 0 7.5 0 9.5 3C7.5 6 2.5 6 0.5 3Z" fill="#eee"/><circle cx="5" cy="3" r="1.3" fill="#535353"/></svg>
<div class="a" style="left:683px;top:338px;width:17px;height:19px;background:#ddd8db"></div>
<div class="a" style="left:662px;top:358px;width:138px;height:1px;background:#484848"></div>

<!-- context menu -->
<div class="a" style="left:697px;top:274px;width:97px;height:153px;background:rgba(0,0,0,0.25);filter:blur(1.5px)"></div>
<div class="a" style="left:699px;top:275px;width:93px;height:151px;background:#f0f0f0;border:1px solid #cfcfcf"></div>
<div class="a" style="left:701px;top:294px;width:90px;height:13px;background:#91c9f7"></div>
<div class="a" style="left:703px;top:294.5px;width:67px;height:13px;border:2px solid #c42b34;border-radius:1px"></div>
<div class="t" style="left:719px;top:278px;color:#111;font-size:8px;letter-spacing:-0.5px">混合选项...</div>
<div class="t" style="left:719px;top:296px;color:#111;font-size:8px;letter-spacing:-0.5px">斜面和浮雕...</div>
<div class="t" style="left:719px;top:309px;color:#111;font-size:8px;letter-spacing:-0.5px">描边...</div>
<div class="t" style="left:719px;top:322px;color:#111;font-size:8px;letter-spacing:-0.5px">内阴影...</div>
<div class="t" style="left:719px;top:335px;color:#111;font-size:8px;letter-spacing:-0.5px">内发光...</div>
<div class="t" style="left:719px;top:347.5px;color:#111;font-size:8px;letter-spacing:-0.5px">光泽...</div>
<div class="t" style="left:719px;top:361px;color:#111;font-size:8px;letter-spacing:-0.5px">颜色叠加...</div>
<div class="t" style="left:719px;top:373.5px;color:#111;font-size:8px;letter-spacing:-0.5px">渐变叠加...</div>
<div class="t" style="left:719px;top:386.5px;color:#333;font-size:8px;letter-spacing:-0.5px;filter:blur(0.3px)">图案叠加</div>
<div class="a" style="left:727px;top:386px;width:10px;height:4px;background:rgba(240,240,240,0.6)"></div>
<div class="a" style="left:740px;top:390px;width:8px;height:4px;background:rgba(240,240,240,0.5)"></div>
<div class="t" style="left:719px;top:400px;color:#555;font-size:8px;letter-spacing:-0.5px;filter:blur(0.3px)">外发光</div>
<div class="a" style="left:723px;top:402px;width:9px;height:3px;background:rgba(240,240,240,0.5)"></div>
<div class="t" style="left:719px;top:411.5px;color:#555;font-size:8px;letter-spacing:-0.5px;filter:blur(0.3px)">投影</div>
<div class="a" style="left:705px;top:376px;width:5px;height:18px;border:1px solid #ddd;border-left:none;border-radius:0 5px 5px 0;opacity:0.6"></div>
<div class="a" style="left:699px;top:426px;width:101px;height:5px;background:#3a3a3a"></div>
<div class="a" style="left:793px;top:262px;width:7px;height:169px;background:#4e4e4e"></div>
<div class="a" style="left:793px;top:283px;width:7px;height:10px;background:#454545"></div>
<div class="a" style="left:793px;top:298px;width:7px;height:9px;background:#454545"></div>
<svg style="left:794px;top:287px" width="5" height="3"><path d="M0.5 0.5L2.5 2.5L4.5 0.5" fill="none" stroke="#bbb" stroke-width="0.9"/></svg>
<svg style="left:794px;top:302px" width="5" height="3"><path d="M0.5 0.5L2.5 2.5L4.5 0.5" fill="none" stroke="#bbb" stroke-width="0.9"/></svg>
<div class="a" style="left:794px;top:310px;width:3px;height:85px;background:#5a5a5a"></div>

</body></html>
